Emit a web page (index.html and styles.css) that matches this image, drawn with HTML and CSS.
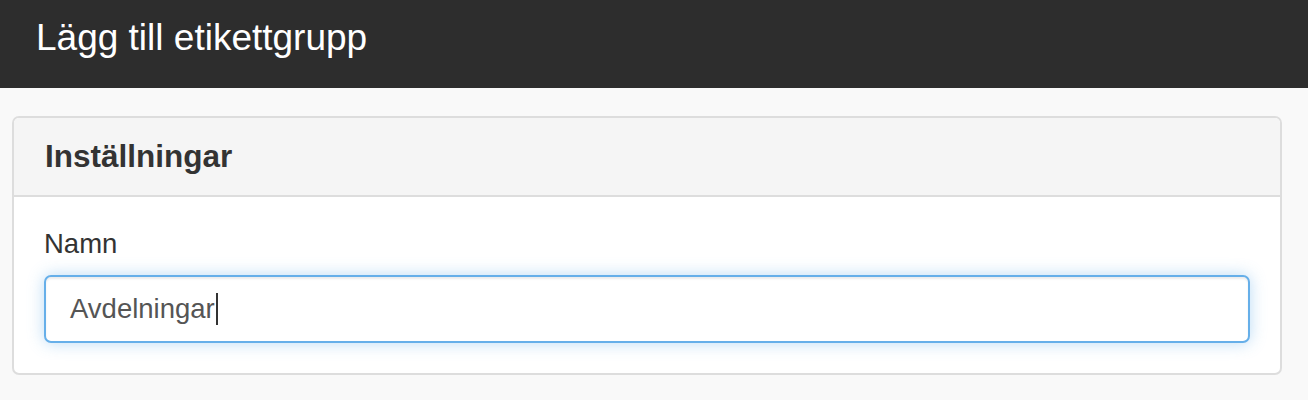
FILE: index.html
```html
<!DOCTYPE html>
<html lang="sv">
<head>
<meta charset="utf-8">
<title>Lägg till etikettgrupp</title>
<link rel="stylesheet" href="styles.css">
</head>
<body>
<header class="topbar">
  <h1 class="topbar-title">Lägg till etikettgrupp</h1>
</header>
<main class="content">
  <section class="panel">
    <div class="panel-heading">
      <h2 class="panel-title">Inställningar</h2>
    </div>
    <div class="panel-body">
      <label class="field-label" for="name">Namn</label>
      <div class="input-focus">
        <span class="input-text">Avdelningar</span><span class="caret"></span>
      </div>
    </div>
  </section>
</main>
</body>
</html>
```
FILE: styles.css
```css
* { box-sizing: border-box; }
html, body { margin: 0; padding: 0; }
body {
  background: #f9f9f9;
  font-family: "Liberation Sans", Arial, Helvetica, sans-serif;
  color: #333;
}
.topbar {
  background: #2d2d2d;
  height: 88px;
  display: flex;
  align-items: center;
  padding-left: 36px;
}
.topbar-title {
  margin: 0;
  color: #fff;
  font-weight: normal;
  font-size: 37px;
  line-height: 1;
  position: relative;
  top: -7px;
}
.content {
  padding: 28px 26px 0 12px;
}
.panel {
  background: #fff;
  border: 2px solid #dddddd;
  border-radius: 7px;
  overflow: hidden;
}
.panel-heading {
  background: #f5f5f5;
  border-bottom: 2px solid #dddddd;
  height: 79px;
  display: flex;
  align-items: center;
  padding-left: 31px;
}
.panel-title {
  margin: 0;
  font-size: 31.5px;
  font-weight: bold;
  line-height: 1;
  color: #333;
}
.panel-body {
  padding: 33px 30px 30px 30px;
  display: flex;
  flex-direction: column;
}
.field-label {
  font-size: 27.5px;
  line-height: 1;
  margin-bottom: 17px;
  color: #333;
}
.input-focus {
  height: 68px;
  border: 2px solid #66afe9;
  border-radius: 7px;
  background: #fff;
  box-shadow: inset 0 2px 2px rgba(0,0,0,0.075), 0 0 16px rgba(102,175,233,0.45);
  display: flex;
  align-items: center;
  padding-left: 24px;
}
.input-text {
  font-size: 27.5px;
  color: #555;
  line-height: 1;
}
.caret {
  display: inline-block;
  width: 2px;
  height: 32px;
  background: #333;
  margin-left: 1px;
}
```
